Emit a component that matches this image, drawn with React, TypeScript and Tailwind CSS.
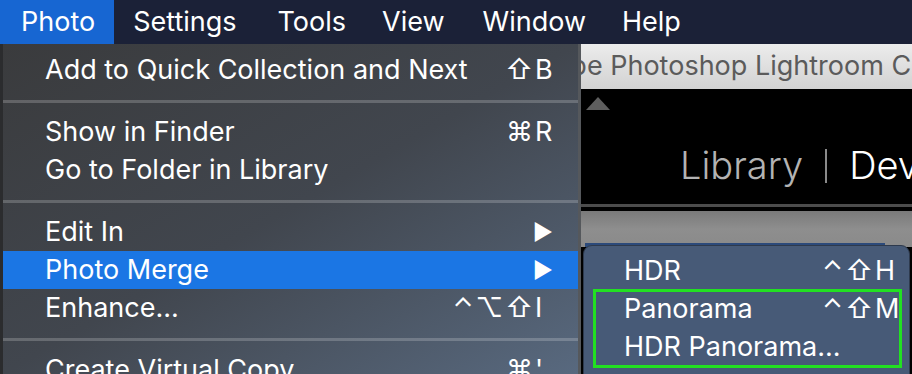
const menuFont = { fontFamily: 'Inter, "DejaVu Sans", sans-serif' };

type Item = { label: string; mods?: string; key?: string; arrow?: boolean; active?: boolean } | 'sep';

const items: Item[] = [
  { label: 'Add to Quick Collection and Next', mods: '⇧', key: 'B' },
  'sep',
  { label: 'Show in Finder', mods: '⌘', key: 'R' },
  { label: 'Go to Folder in Library' },
  'sep',
  { label: 'Edit In', arrow: true },
  { label: 'Photo Merge', arrow: true, active: true },
  { label: 'Enhance...', mods: '⌃⌥⇧', key: 'I' },
  'sep',
  { label: 'Create Virtual Copy', mods: '⌘', key: "'" },
];

const subItems = [
  { label: 'HDR', mods: '⌃⇧', key: 'H' },
  { label: 'Panorama', mods: '⌃⇧', key: 'M' },
  { label: 'HDR Panorama...' },
];

const Shortcut = ({ mods, keyName }: { mods?: string; keyName?: string }) => (
  <span className="flex items-center">
    <span className="tracking-[2px]">{mods}</span>
    <span className="w-[22px] text-left">{keyName}</span>
  </span>
);

const MenuBar = () => (
  <div className="flex h-[44px] shrink-0 items-center bg-[#1b2137] text-[27px] text-white">
    <div className="flex h-full items-center bg-[#1766d2] pl-[21px] pr-[19px]">Photo</div>
    <div className="ml-[19px]">Settings</div>
    <div className="ml-[41px]">Tools</div>
    <div className="ml-[36px]">View</div>
    <div className="ml-[38px]">Window</div>
    <div className="ml-[36px]">Help</div>
  </div>
);

const PhotoMenu = () => (
  <div className="flex w-[581px] shrink-0 flex-col overflow-hidden border-l-[3px] border-r-[3px] border-l-[#2b2c2e] border-r-[#55585c] bg-linear-to-br from-[#3a3b3d] via-[#41464e] to-[#58697f] pt-[7px] text-[27px] text-white">
    {items.map((it, i) =>
      it === 'sep' ? (
        <div key={i} className="flex h-[24px] shrink-0 items-center">
          <div className="h-[3px] w-full bg-white/20" />
        </div>
      ) : (
        <div
          key={i}
          className={`flex h-[38px] shrink-0 items-center justify-between pl-[42px] pr-[21px] ${
            it.active ? 'bg-[#1b76e4]' : ''
          }`}
        >
          <span>{it.label}</span>
          {it.key && <Shortcut mods={it.mods} keyName={it.key} />}
          {it.arrow && <span className="pr-[4px] text-[22px]">▶</span>}
        </div>
      )
    )}
  </div>
);

const SubMenu = () => (
  <div className="relative -mt-[2px] ml-[2px] mr-[2px] flex h-[140px] shrink-0 flex-col rounded-[9px] border border-[#2e3a4d] bg-[#475a77] pt-[6px] text-[27px] text-white">
    {subItems.map((s) => (
      <div key={s.label} className="flex h-[38px] shrink-0 items-center justify-between pl-[40px] pr-[12px]">
        <span>{s.label}</span>
        {s.key && <Shortcut mods={s.mods} keyName={s.key} />}
      </div>
    ))}
    {/* annotation box */}
    <div className="absolute left-[9px] right-[7px] top-[43px] h-[79px] border-[3px] border-[#22e022]" />
  </div>
);

const Backdrop = () => (
  <div className="flex min-w-0 flex-1 flex-col overflow-hidden">
    <div className="flex h-[45px] shrink-0 items-center overflow-hidden whitespace-nowrap bg-linear-to-b from-[#ececec] to-[#d2d2d2] text-[27px] text-[#5b5b5b]">
      <span className="-ml-[62px]">Adobe Photoshop Lightroom Classic</span>
    </div>
    <div className="relative flex h-[115px] shrink-0 items-end bg-black pb-[10px]">
      <div className="absolute left-[5px] top-[8px] h-0 w-0 border-x-[12px] border-b-[13px] border-x-transparent border-b-[#5e5e5e]" />
      <div className="ml-[99px] flex items-center whitespace-nowrap text-[38px] font-light">
        <span className="text-[#b3b3b3]">Library</span>
        <span className="mx-[22px] h-[34px] w-[2px] bg-[#8a8a8a]" />
        <span className="text-white">Dev</span>
      </div>
    </div>
    <div className="h-[3px] shrink-0 bg-[#4c4c4c]" />
    <div className="h-[4px] shrink-0 bg-black" />
    <div className="h-[36px] shrink-0 bg-linear-to-b from-[#7a7a7a] via-[#8e8e8e] to-[#8a8a8a]">
      <div className="ml-[4px] mt-[32px] h-[4px] w-[300px] bg-[#2c4a7a]" />
    </div>
    <SubMenu />
  </div>
);

export default function App() {
  return (
    <div className="flex h-[374px] w-[912px] flex-col overflow-hidden bg-black" style={menuFont}>
      <MenuBar />
      <div className="flex min-h-0 flex-1">
        <PhotoMenu />
        <Backdrop />
      </div>
    </div>
  );
}
